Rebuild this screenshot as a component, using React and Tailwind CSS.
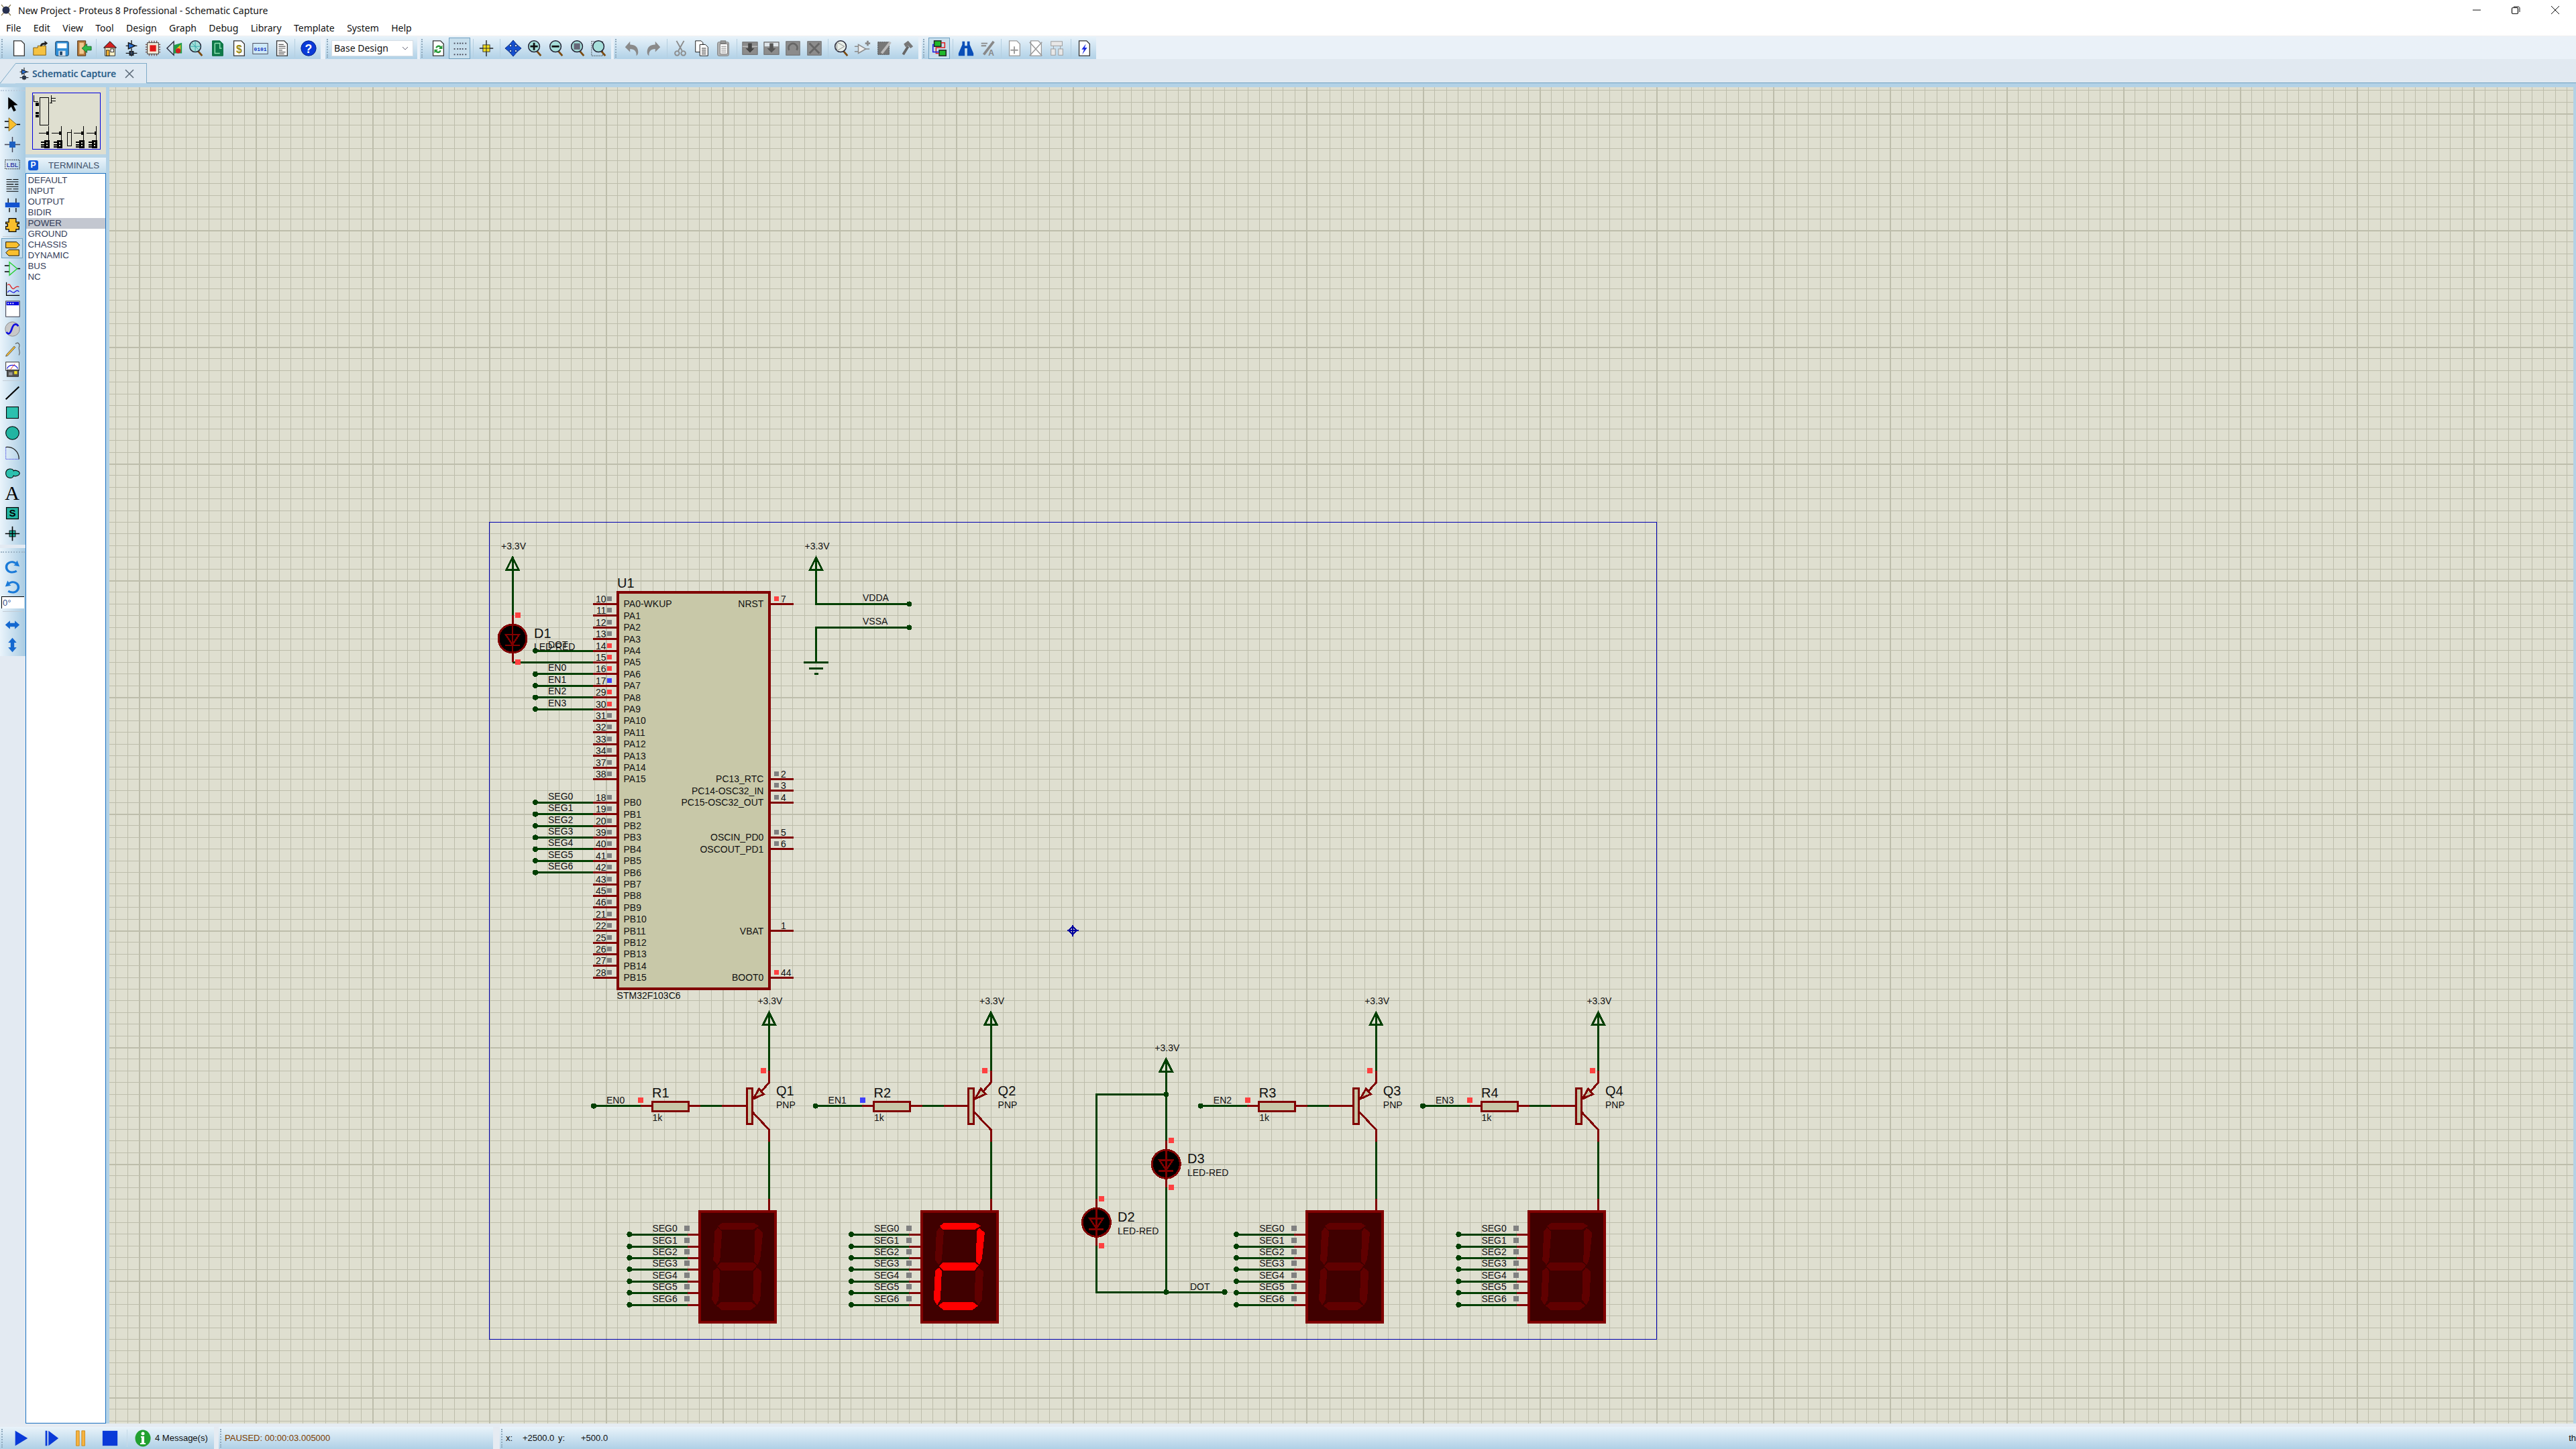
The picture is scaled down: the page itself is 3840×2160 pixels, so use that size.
import React from 'react';

const GREEN = '#003f00';
const RED = '#800000';
const BODY = '#c8c8a8';
const HOT = '#ff4040';
const COOL = '#4040ff';
const IDLE = '#808080';

const pinY = (i) => 900.4 + i * 17.4;
const gridStops = [0, 17, 35, 52, 70, 87, 104, 122, 139, 157];

const leftPins = [
    ['10', 'PA0-WKUP', 0, IDLE], ['11', 'PA1', 1, IDLE], ['12', 'PA2', 2, IDLE], ['13', 'PA3', 3, IDLE],
    ['14', 'PA4', 4, HOT], ['15', 'PA5', 5, HOT], ['16', 'PA6', 6, HOT], ['17', 'PA7', 7, COOL],
    ['29', 'PA8', 8, HOT], ['30', 'PA9', 9, HOT], ['31', 'PA10', 10, IDLE], ['32', 'PA11', 11, IDLE],
    ['33', 'PA12', 12, IDLE], ['34', 'PA13', 13, IDLE], ['37', 'PA14', 14, IDLE], ['38', 'PA15', 15, IDLE],
    ['18', 'PB0', 17, IDLE], ['19', 'PB1', 18, IDLE], ['20', 'PB2', 19, IDLE], ['39', 'PB3', 20, IDLE],
    ['40', 'PB4', 21, IDLE], ['41', 'PB5', 22, IDLE], ['42', 'PB6', 23, IDLE], ['43', 'PB7', 24, IDLE],
    ['45', 'PB8', 25, IDLE], ['46', 'PB9', 26, IDLE], ['21', 'PB10', 27, IDLE], ['22', 'PB11', 28, IDLE],
    ['25', 'PB12', 29, IDLE], ['26', 'PB13', 30, IDLE], ['27', 'PB14', 31, IDLE], ['28', 'PB15', 32, IDLE],
];

const rightPins = [
    ['7', 'NRST', 0, HOT], ['2', 'PC13_RTC', 15, IDLE], ['3', 'PC14-OSC32_IN', 16, IDLE],
    ['4', 'PC15-OSC32_OUT', 17, IDLE], ['5', 'OSCIN_PD0', 20, IDLE], ['6', 'OSCOUT_PD1', 21, IDLE],
    ['1', 'VBAT', 28, null], ['44', 'BOOT0', 32, HOT],
];

const nets = [
    ['DOT', 4], ['EN0', 6], ['EN1', 7], ['EN2', 8], ['EN3', 9],
    ['SEG0', 17], ['SEG1', 18], ['SEG2', 19], ['SEG3', 20], ['SEG4', 21], ['SEG5', 22], ['SEG6', 23],
];

const segments = {
    a: '36,18 82,18 90,23 82,28 33,28 29,23',
    b: '88,26 96,33 92,72 88,81 83,76 84,31',
    c: '87,85 94,91 92,133 87,141 81,133 82,91',
    d: '34,136 78,136 86,142 78,148 34,148 27,142',
    e: '28,85 32,90 30,133 25,141 20,133 22,90',
    f: '29,25 35,31 32,74 28,81 22,74 24,31',
    g: '34,77 81,77 87,82 81,89 34,89 28,83',
};

const segY = [1840, 1858, 1875, 1892, 1910, 1927, 1945];

const Wire = ({ d, color = GREEN }) => <path d={d} fill="none" stroke={color} strokeWidth="3" />;
const Dot = ({ x, y }) => <circle cx={x} cy={y} r="4" fill={GREEN} />;
const Sq = ({ x, y, color = HOT }) => <rect x={x} y={y} width="8" height="8" fill={color} />;
const Label = ({ x, y, size = 14, anchor, children }) => (
    <text x={x} y={y} fontSize={size} textAnchor={anchor} fill="#111" shapeRendering="auto">{children}</text>
);

const Power = ({ x, tip }) => (
    <g>
        <Label x={x - 17} y={tip - 11.5}>+3.3V</Label>
        <Wire d={`M${x} ${tip}V${tip + 19}`} />
        <polygon points={`${x},${tip + 1} ${x + 9},${tip + 19} ${x - 9},${tip + 19}`} fill="none" stroke={GREEN} strokeWidth="3" />
    </g>
);

const Led = ({ x, y }) => (
    <g>
        <Wire d={`M${x} ${y - 35}V${y + 35}`} color={RED} />
        <circle cx={x} cy={y} r="21" fill="#000" stroke={RED} strokeWidth="3" />
        <polygon points={`${x - 10},${y - 6} ${x + 10},${y - 6} ${x},${y + 9}`} fill="none" stroke={RED} strokeWidth="2.5" />
        <path d={`M${x - 11} ${y + 10}H${x + 11}M${x} ${y - 20}V${y + 20}`} stroke={RED} strokeWidth="2.5" />
        <Sq x={x + 4} y={y - 39} />
        <Sq x={x + 4} y={y + 31} />
    </g>
);

const Driver = ({ dx, q, r, en, blue }) => (
    <g transform={`translate(${dx} 0)`}>
        <Power x={1146.4} tip={1508.6} />
        <Wire d="M1146.4 1527V1596" />
        <Wire d="M1146.4 1596V1613.8L1134 1628" color={RED} />
        <polygon points="1131.5,1623 1138.5,1631 1123,1638" fill={BODY} stroke={RED} strokeWidth="3" />
        <Wire d="M1122 1658L1146.4 1684V1702" color={RED} />
        <Wire d="M1146.4 1702V1787" />
        <Wire d="M1146.4 1787V1805" color={RED} />
        <Sq x={1133.5} y={1591.5} />
        <Dot x={885} y={1648.6} />
        <Wire d="M885 1648.6H954.6" />
        <Wire d="M954.6 1648.6H972M1026 1648.6H1044" color={RED} />
        <Wire d="M1044 1648.6H1076" />
        <Wire d="M1076 1648.6H1112" color={RED} />
        <rect x="1113" y="1622.5" width="8" height="53" fill={BODY} stroke={RED} strokeWidth="3" />
        <rect x="972" y="1642" width="54" height="14" fill={BODY} stroke={RED} strokeWidth="3" />
        <Sq x={951} y={1635.5} color={blue ? COOL : HOT} />
        <Label x={904} y={1645}>{en}</Label>
        <Label x={972} y={1636} size={20}>{r}</Label>
        <Label x={972.4} y={1670.7}>1k</Label>
        <Label x={1157} y={1632.8} size={20}>{q}</Label>
        <Label x={1157} y={1652}>PNP</Label>
    </g>
);

const Display = ({ dx, lit = '' }) => (
    <g transform={`translate(${dx} 0)`}>
        <rect x="1043" y="1806" width="113" height="165" fill="#400000" stroke={RED} strokeWidth="4" />
        {Object.entries(segments).map(([key, pts]) => (
            <polygon
                key={key}
                points={pts}
                transform="translate(1041.3 1804.5)"
                fill={lit.includes(key) ? '#ff0000' : '#600000'}
            />
        ))}
        {segY.map((y, i) => (
            <g key={y}>
                <Dot x={938.3} y={y} />
                <Wire d={`M938.3 ${y}H1024.5`} />
                <Wire d={`M1024.5 ${y}H1042`} color={RED} />
                <rect x="1020" y={y - 13} width="8" height="8" fill={IDLE} />
                <Label x={972.4} y={y - 4}>{`SEG${i}`}</Label>
            </g>
        ))}
    </g>
);

const Chip = () => (
    <g>
        {leftPins.map(([num, name, i, color]) => (
            <g key={num}>
                <Wire d={`M884 ${pinY(i)}H920`} color={RED} />
                <rect x="905" y={pinY(i) - 11.5} width="7" height="7" fill={color} />
                <Label x={903.6} y={pinY(i) - 2.5} anchor="end">{num}</Label>
            </g>
        ))}
        {rightPins.map(([num, name, i, color]) => (
            <g key={num}>
                <Wire d={`M1147 ${pinY(i)}H1183`} color={RED} />
                {color && <rect x="1154" y={pinY(i) - 11.5} width="7" height="7" fill={color} />}
                <Label x={1164} y={pinY(i) - 2.5}>{num}</Label>
            </g>
        ))}
        <rect x="921" y="883" width="226" height="591" fill={BODY} stroke={RED} strokeWidth="3.5" />
        {leftPins.map(([num, name, i]) => (
            <Label key={name} x={929.5} y={pinY(i) + 5}>{name}</Label>
        ))}
        {rightPins.map(([num, name, i]) => (
            <Label key={name} x={1138.4} y={pinY(i) + 5} anchor="end">{name}</Label>
        ))}
        <Label x={920} y={876.4} size={20}>U1</Label>
        <Label x={919.6} y={1489}>STM32F103C6</Label>
        {nets.map(([name, i]) => (
            <g key={name}>
                <Dot x={798} y={pinY(i)} />
                <Wire d={`M798 ${pinY(i)}H884`} />
                <Label x={817} y={pinY(i) - 4.5}>{name}</Label>
            </g>
        ))}
    </g>
);

const Schematic = () => (
    <svg viewBox="163 130 3673 1992" className="block w-full h-full font-['Liberation_Sans',sans-serif]" shapeRendering="crispEdges">
        <defs>
            <pattern id="sheetGrid" patternUnits="userSpaceOnUse" x="33" y="169" width="174" height="174">
                <rect x="0" y="0" width="174" height="174" fill="#dfdfd0" />
                {gridStops.map((p) => (
                    <g key={p} fill="#bdbdab">
                        <rect x={p} y="0" width="1" height="174" />
                        <rect x="0" y={p} width="174" height="1" />
                    </g>
                ))}
                <rect x="0" y="0" width="2" height="174" fill="#bdbdab" />
                <rect x="0" y="0" width="174" height="2" fill="#bdbdab" />
            </pattern>
        </defs>
        <rect x="163" y="130" width="3673" height="1992" fill="url(#sheetGrid)" />
        <rect x="729.5" y="778.5" width="1740" height="1218" fill="none" stroke="#0000b0" strokeWidth="1" />

        <Chip />

        <Power x={764} tip={830} />
        <Wire d="M764 849V918" />
        <Wire d="M764 987H884" />
        <Led x={764} y={952} />
        <Label x={796} y={951.4} size={20}>D1</Label>
        <Label x={796} y={969}>LED-RED</Label>

        <Power x={1216.5} tip={830} />
        <Wire d="M1216.5 849V900.4H1355.4M1355.4 935.4H1216.5V987" />
        <Dot x={1355.4} y={900.4} />
        <Dot x={1355.4} y={935.4} />
        <Label x={1286} y={895.7}>VDDA</Label>
        <Label x={1286} y={930.5}>VSSA</Label>
        <Wire d="M1198 987H1235M1206 996.4H1227M1213.5 1004.5H1220" />

        <Driver dx={0} q="Q1" r="R1" en="EN0" />
        <Driver dx={330.6} q="Q2" r="R2" en="EN1" blue />
        <Driver dx={904.8} q="Q3" r="R3" en="EN2" />
        <Driver dx={1236} q="Q4" r="R4" en="EN3" />
        <Display dx={0} />
        <Display dx={330.6} lit="abged" />
        <Display dx={904.8} />
        <Display dx={1236} />

        <Power x={1738.3} tip={1578} />
        <Wire d="M1738.3 1597V1700M1738.3 1770V1926M1738.3 1631.3H1634.4V1787M1634.4 1857V1926H1825.6" />
        <Dot x={1738.3} y={1631.3} />
        <Dot x={1738.3} y={1926} />
        <Dot x={1825.6} y={1926} />
        <Led x={1738.3} y={1735.3} />
        <Led x={1634.4} y={1822.3} />
        <Label x={1770} y={1734} size={20}>D3</Label>
        <Label x={1770} y={1752.7}>LED-RED</Label>
        <Label x={1666} y={1821} size={20}>D2</Label>
        <Label x={1666} y={1839.7}>LED-RED</Label>
        <Label x={1774} y={1922.7}>DOT</Label>

        <g stroke="#0000a0" strokeWidth="1.5" fill="none">
            <path d="M1599 1378.5V1395.5M1590.5 1387H1607.5" />
            <path d="M1599 1381L1605 1387L1599 1393L1593 1387Z" />
        </g>
    </svg>
);

const Ico = ({ children, size = 28 }) => (
    <svg viewBox="0 0 28 28" width={size} height={size} className="shrink-0">{children}</svg>
);

const Page = ({ fill = '#fff', stroke = '#333' }) => (
    <path d="M6 2H18L23 7V26H6Z" fill={fill} stroke={stroke} strokeWidth="1.4" />
);

const Glass = ({ fill = '#a6dfda', children }) => (
    <g>
        <path d="M18 19L24 26" stroke="#7a4a10" strokeWidth="3" />
        <circle cx="13" cy="11" r="9" fill={fill} stroke="#223" strokeWidth="1.6" />
        {children}
    </g>
);

const toolbarIcons = {
    newDoc: <Page />,
    open: (<g><path d="M3 13H10V10H23V25H3Z" fill="#f5c242" stroke="#7a5a10" /><path d="M14 11C14 6 17 5 21 5V2L26 6L21 10V8C18 8 17 9 16 11Z" fill="#222" /></g>),
    save: (<g><rect x="4" y="3" width="21" height="23" rx="2" fill="#2f8fd8" stroke="#135" /><path d="M7 6H22V14H7Z" fill="#fff" /><path d="M9 18H20V26H9Z" fill="#dfe6ee" /><rect x="11" y="19" width="4" height="6" fill="#246" /></g>),
    exit: (<g><path d="M5 2H18V26H5Z" fill="#b57a3a" stroke="#4a2a10" /><path d="M8 5H15V23H8Z" fill="#f0c890" /><path d="M12 14L20 7V11H27V17H20V21Z" fill="#2eb84a" stroke="#186a28" /></g>),
    home: (<g><path d="M14 3L4 13H6V26H22V13H24Z" fill="#fff3c8" stroke="#222" /><path d="M14 3L4 13H24Z" fill="#d32020" stroke="#222" /><rect x="15" y="15" width="5" height="5" fill="#fff" stroke="#222" /><rect x="8" y="17" width="5" height="9" fill="#f0b030" stroke="#222" /></g>),
    sch: (<g stroke="#111" strokeWidth="1.4"><path d="M14 1V7M14 14V19M14 24V27M5 10H23M5 22H12M16 22H23" fill="none" /><path d="M9 5L20 10L9 15Z" fill="#2a6fd0" /><rect x="11" y="19" width="2" height="6" fill="#2a6fd0" /><rect x="15" y="19" width="2" height="6" fill="#2a6fd0" /></g>),
    chip: (<g><path d="M8 2V26M12 2V26M16 2V26M20 2V26M2 8H26M2 12H26M2 16H26M2 20H26" stroke="#7a4a40" strokeWidth="1.4" /><rect x="5" y="5" width="18" height="18" fill="#f0ead8" stroke="#333" /><rect x="9" y="9" width="10" height="10" fill="#e01818" /></g>),
    threeD: (<g><path d="M2 14L13 3V25Z" fill="none" stroke="#223" strokeWidth="1.4" /><path d="M13 9L26 5V22L13 22Z" fill="#1f9a48" /><path d="M16 16L24 8V20Z" fill="#e0c020" /><circle cx="20" cy="18" r="4" fill="#d02020" /></g>),
    glass: <Glass><path d="M13 2V20M4 11H22M7 5L19 17" stroke="#3aa" strokeWidth="1" /></Glass>,
    pcb: (<g><path d="M6 2H18L23 7V26H6Z" fill="#0e7a4a" stroke="#063" /><path d="M10 6H18V14H21M10 6V22H18" fill="none" stroke="#8fe0b0" strokeWidth="1.6" /></g>),
    dollar: (<g><Page /><text x="14.5" y="21" fontSize="17" fontWeight="700" textAnchor="middle" fill="#9a8a10" fontFamily="Liberation Sans">$</text></g>),
    binary: (<g><rect x="2" y="6" width="24" height="17" fill="#cfeaf8" stroke="#445" /><text x="14" y="18" fontSize="8.5" fontWeight="700" textAnchor="middle" fill="#1030c0" fontFamily="Liberation Mono">0101</text></g>),
    report: (<g><Page /><path d="M9 8H17M9 11H20M9 14H20M9 17H15M9 20H20M9 23H18" stroke="#555" strokeWidth="1.3" /></g>),
    help: (<g><circle cx="14" cy="14" r="12" fill="#0a3ad8" stroke="#062080" /><text x="14" y="21" fontSize="19" fontWeight="700" textAnchor="middle" fill="#fff" fontFamily="Liberation Sans">?</text></g>),
    refresh: (<g><Page /><path d="M10 13C11 9 16 8 19 11L21 9V15H15L17 13C15 11 13 12 12 14Z" fill="#2a9a3a" /><path d="M19 18C18 22 13 23 10 20L8 22V16H14L12 18C14 20 16 19 17 17Z" fill="#2a9a3a" /></g>),
    grid: (<g fill="#445">{[5, 14, 23].map((y) => [5, 10, 14, 18, 23].map((x) => <rect key={`${x}-${y}`} x={x} y={y} width="2" height="2" />))}</g>),
    origin: (<g><path d="M14 1V27M3 14H25" stroke="#222" strokeWidth="1.5" /><rect x="8.5" y="8.5" width="11" height="11" fill="#f4e020" stroke="#333" /><path d="M14 8V20M8 14H20" stroke="#222" /></g>),
    pan: <path d="M14 1L20 8H16.5V11.5H20V8L27 14L20 20V16.5H16.5V20H20L14 27L8 20H11.5V16.5H8V20L1 14L8 8V11.5H11.5V8H8Z" fill="#1550d0" stroke="#0a2a80" />,
    zoomIn: <Glass><path d="M7 11H19M13 5V17" stroke="#111" strokeWidth="3" /></Glass>,
    zoomOut: <Glass><path d="M7 11H19" stroke="#111" strokeWidth="3" /></Glass>,
    zoomAll: <Glass><rect x="8" y="6" width="10" height="10" fill="#667" /></Glass>,
    zoomArea: (<g><rect x="2" y="3" width="18" height="23" fill="none" stroke="#222" strokeDasharray="1.5 1.5" /><Glass /></g>),
    undo: <path d="M3 12L11 3V8C19 8 24 12 24 20C24 23 23 25 21 26C22 19 18 15 11 15V20Z" fill="#8a8a8a" />,
    redo: <path d="M25 12L17 3V8C9 8 4 12 4 20C4 23 5 25 7 26C6 19 10 15 17 15V20Z" fill="#8a8a8a" />,
    cut: (<g fill="none" stroke="#8a8a8a" strokeWidth="2"><path d="M8 2L17 18M20 2L11 18" /><circle cx="9" cy="22" r="3.5" /><circle cx="19" cy="22" r="3.5" /></g>),
    copy: (<g stroke="#111"><path d="M4 2H13L16 5V20H4Z" fill="#fff" /><path d="M11 8H20L24 12V26H11Z" fill="#fff" /><path d="M14 14H21M14 17H21M14 20H21M14 23H21" /></g>),
    paste: (<g stroke="#777"><rect x="5" y="4" width="18" height="22" rx="2" fill="#b5b5b5" /><rect x="9" y="7" width="12" height="16" fill="#fff" /><rect x="10" y="2" width="8" height="4" fill="#999" /><path d="M11 11H19M11 14H19M11 17H19M11 20H19" /></g>),
    blockCopy: (<g><rect x="2" y="4" width="24" height="20" fill="#8c8c8c" stroke="#666" /><path d="M2 11H26" stroke="#ddd" /><path d="M11 6H17V14H21L14 21L7 14H11Z" fill="#444" /></g>),
    blockMove: (<g><rect x="2" y="4" width="24" height="20" fill="#8c8c8c" stroke="#666" /><rect x="3" y="5" width="22" height="6" fill="#dfe5ea" /><path d="M11 6H17V14H21L14 21L7 14H11Z" fill="#555" /></g>),
    blockRotate: (<g><rect x="3" y="3" width="22" height="22" fill="#8c8c8c" stroke="#666" /><path d="M8 17A7 7 0 1 1 20 17" fill="none" stroke="#666" strokeWidth="3" /></g>),
    blockDelete: (<g><rect x="3" y="3" width="22" height="22" fill="#8c8c8c" stroke="#666" /><path d="M6 6L22 22M22 6L6 22" stroke="#666" strokeWidth="3" /></g>),
    pick: <Glass fill="#e8eee8"><path d="M7 4L19 11L7 18Z" fill="none" stroke="#888" /></Glass>,
    device: (<g fill="none" stroke="#8a8a8a" strokeWidth="1.6"><path d="M7 8L19 15L7 22Z" fill="#eee" /><path d="M1 11H7M1 19H7M19 15H25" /><path d="M22 2V10M18 6H26" strokeWidth="3" /></g>),
    pack: (<g><rect x="4" y="4" width="18" height="20" fill="#777" stroke="#444" strokeDasharray="2 1" /><path d="M24 4L10 22" stroke="#bbb" strokeWidth="4" /></g>),
    hammer: (<g><path d="M10 24L18 11" stroke="#666" strokeWidth="4" /><path d="M11 7L18 2L26 11L22 14L18 10L14 12Z" fill="#777" /></g>),
    net: (<g fill="none" strokeWidth="1.6"><rect x="6" y="2" width="11" height="9" fill="#1fb82a" stroke="#222" /><rect x="14" y="17" width="11" height="9" fill="#1fb82a" stroke="#222" /><path d="M17 5H23V13H9V22H14" stroke="#e02020" /><path d="M6 8H4V20H14" stroke="#1a1ae0" /></g>),
    binoculars: (<g fill="#0a4fb8"><path d="M8 3H12V10H16V3H20V8L26 22V26H16V14H12V26H2V22L8 8Z" /></g>),
    property: (<g><path d="M4 6H14M4 10H12" stroke="#888" strokeWidth="2" /><path d="M24 3L8 24" stroke="#888" strokeWidth="4" /><text x="20" y="26" fontSize="13" fontWeight="700" textAnchor="middle" fill="#888" fontFamily="Liberation Sans">A</text></g>),
    newSheet: (<g><Page stroke="#999" /><path d="M14 11V23M8 17H20" stroke="#999" strokeWidth="2" /></g>),
    delSheet: (<g><Page stroke="#999" /><path d="M4 4L24 26M24 4L4 26" stroke="#999" strokeWidth="1.6" /></g>),
    child: (<g fill="#e8e8e8" stroke="#999"><rect x="4" y="3" width="18" height="7" /><rect x="4" y="15" width="7" height="10" /><rect x="16" y="15" width="7" height="10" /><path d="M8 10V15M19 10V15" /></g>),
    bolt: (<g><Page /><path d="M17 7L10 16H14L11 24L19 13H15Z" fill="#1a2ae0" /></g>),
};

const sideIcons = {
    select: <path d="M7 2V23L12 18L16 26L20 24L16 16L23 15Z" fill="#000" />,
    comp: (<g><path d="M1 9H8M1 19H8M21 14H27" stroke="#000" strokeWidth="1.5" /><path d="M8 3L21 14L8 25Z" fill="#f9bf2d" stroke="#7a5a10" /></g>),
    junction: (<g><path d="M14 1V27M1 14H27" stroke="#445" strokeWidth="1.6" /><rect x="9" y="9" width="10" height="10" fill="#1d5fc0" /></g>),
    lbl: (<g><rect x="2" y="6" width="24" height="15" fill="none" stroke="#000" strokeDasharray="2 1.5" /><text x="14" y="18" fontSize="11" textAnchor="middle" fill="#0a0a90" fontFamily="Liberation Sans">LBL</text></g>),
    script: <path d="M4 5H13M15 5H24M4 9H24M4 13H16M18 13H24M4 17H24M4 21H13M15 21H24M4 25H24" stroke="#000" strokeWidth="1.2" />,
    bus: (<g><path d="M7 3V10M20 3V10M9 19V26M20 19V26" stroke="#111" strokeWidth="1.6" /><rect x="2" y="10" width="24" height="8" fill="#1253d0" /></g>),
    sub: <path d="M8 3H20V9H25V12H22V16H25V21H20V25H8V21H3V16H6V12H3V9H8Z" fill="#f9bf2d" stroke="#000" strokeWidth="1.4" />,
    terminal: (<g stroke="#000"><path d="M3 3H21L26 8L21 13H3Z" fill="#f9bf2d" /><path d="M25 16H8L3 21L8 26H25Z" fill="#f9bf2d" /></g>),
    pin: (<g><path d="M1 9H9M1 19H9M22 14H27" stroke="#000" strokeWidth="1.5" /><path d="M9 3L22 14L9 25Z" fill="none" stroke="#1fd02a" strokeWidth="1.4" /></g>),
    graph: (<g fill="none" strokeWidth="1.4"><path d="M4 3V25H26" stroke="#000" /><path d="M6 8C10 2 12 16 16 14C19 12 21 8 25 11" stroke="#e02020" /><path d="M6 20C10 13 13 22 17 20C20 18 22 15 25 19" stroke="#1a1ae0" /></g>),
    tape: (<g><rect x="3" y="1" width="23" height="26" fill="#fff" stroke="#223" /><rect x="4" y="2" width="21" height="6" fill="#0a0ae0" /><path d="M6 5H8M10 5H12M14 5H16" stroke="#fff" strokeWidth="2" /></g>),
    gen: (<g><circle cx="14" cy="14" r="12" fill="#c8c8c8" stroke="#888" /><path d="M4 19C8 25 11 20 13 14C15 7 19 3 24 9" fill="none" stroke="#1010e0" strokeWidth="3" /></g>),
    probe: (<g><path d="M4 23L3 26L6 25L19 11L17 9Z" fill="#f4bb30" stroke="#555" /><path d="M19 5C24 1 27 6 25 11C24 15 28 18 25 24" fill="none" stroke="#555" strokeWidth="1.2" /></g>),
    meter: (<g><rect x="3" y="2" width="22" height="14" fill="#fff" stroke="#222" /><path d="M5 13C8 5 20 5 23 13" fill="none" stroke="#1a1ae0" strokeWidth="1.4" /><path d="M11 14L18 5" stroke="#e02020" /><rect x="5" y="15" width="19" height="11" fill="#555" stroke="#222" /><rect x="17" y="17" width="5" height="5" fill="#f0e020" /><rect x="8" y="19" width="6" height="5" fill="#999" /></g>),
    line: <path d="M3 25L25 4" stroke="#000" strokeWidth="2.4" />,
    box: <rect x="4" y="4" width="20" height="19" fill="#2cc0ae" stroke="#000" strokeWidth="1.2" />,
    circle: <circle cx="14" cy="14" r="11" fill="#22b5a2" stroke="#000" strokeWidth="1.2" />,
    arc: (<g fill="none"><path d="M3 4V24H25" stroke="#3030e0" strokeDasharray="1.5 1" /><path d="M3 4C15 3 25 11 25 24" stroke="#222" strokeWidth="1.4" /></g>),
    poly: <path d="M3 14C3 5 15 5 16 10C18 8 26 10 26 14C26 18 18 20 16 18C14 24 3 23 3 14Z" fill="#2cc0ae" stroke="#000" strokeWidth="1.2" />,
    symbol: (<g><rect x="4" y="4" width="20" height="19" fill="#22b5a2" stroke="#000" strokeWidth="1.4" /><text x="14" y="19" fontSize="17" fontWeight="700" textAnchor="middle" fill="#000" fontFamily="Liberation Sans">S</text></g>),
    marker: (<g><rect x="9" y="9" width="10" height="10" fill="#22b5a2" stroke="#000" /><path d="M14 2V26M2 14H26" stroke="#000" strokeWidth="1.8" /></g>),
    cw: <path d="M22 4L26 14L16 12L19 10C13 6 6 9 6 15C6 21 14 24 20 20L22 23C13 28 2 24 2 15C2 6 13 2 20 7Z" fill="#1a7ad8" />,
    ccw: <path d="M6 4L2 14L12 12L9 10C15 6 22 9 22 15C22 21 14 24 8 20L6 23C15 28 26 24 26 15C26 6 15 2 8 7Z" fill="#1a7ad8" />,
    flipH: <path d="M2 14L10 7V11H18V7L26 14L18 21V17H10V21Z" fill="#1468d0" />,
    flipV: <path d="M14 2L21 10H17V18H21L14 26L7 18H11V10H7Z" fill="#1468d0" />,
};

const terminalNames = ['DEFAULT', 'INPUT', 'OUTPUT', 'BIDIR', 'POWER', 'GROUND', 'CHASSIS', 'DYNAMIC', 'BUS', 'NC'];
const menus = ['File', 'Edit', 'View', 'Tool', 'Design', 'Graph', 'Debug', 'Library', 'Template', 'System', 'Help'];

const Grip = ({ gap = 'mr-[7px]' }) => (
    <div className={`ml-[2px] w-[2px] h-[28px] border-l-2 border-dotted border-[#8fa9bd] ${gap}`} />
);

const Sep = () => (
    <div className="w-[8px] h-[28px] flex justify-center"><div className="w-px h-full bg-[#b5cfe0]" /></div>
);

const Btn = ({ icon, active }) => (
    <div className={`w-[32px] h-[32px] flex items-center justify-center ${active ? 'bg-[#c7deec] border border-[#6e9fbf]' : ''}`}>
        <Ico size={26}>{toolbarIcons[icon]}</Ico>
    </div>
);

const Segment = ({ className = '', children }) => (
    <div className={`h-[35px] flex items-center bg-linear-to-b from-[#e9f3fa] to-[#afd0e6] ${className}`}>{children}</div>
);

const Tool = ({ icon, active }) => (
    <div className={`h-[30px] ml-[2px] mr-[4px] flex items-center justify-center ${active ? 'bg-[#c2dbeb] border border-[#6e9fbf]' : ''}`}>
        {icon === 'text'
            ? <span className="font-['Liberation_Serif',serif] text-[30px] leading-[30px] text-black">A</span>
            : <Ico size={25}>{sideIcons[icon]}</Ico>}
    </div>
);

const Rule = ({ className = '' }) => <div className={`mx-[4px] h-px bg-[#c3ccd5] ${className}`} />;

const Overview = () => (
    <svg viewBox="114 0 360 300" className="block w-[120px] h-[100px]" shapeRendering="crispEdges">
        <rect x="114" y="0" width="360" height="300" fill="#dfdfd0" />
        <rect x="145" y="25" width="302" height="253" fill="none" stroke="#0000e0" strokeWidth="3" />
        <g fill="none" stroke="#000" strokeWidth="3">
            <rect x="178" y="46" width="40" height="124" />
            <path d="M150 36V65H172M228 36V70M228 48H250M228 60H250M222 70H234" />
            <path d="M218 175V238M174 205H212M274 175V238M232 205H268M372 175V238M330 205H366M430 175V238M388 205H424" />
            <path d="M301 202H319V262H301ZM319 190V262" />
        </g>
        <g fill="#000">
            <rect x="160" y="70" width="15" height="14" />
            <rect x="160" y="110" width="15" height="10" />
            <rect x="160" y="124" width="15" height="10" />
            {[183, 240, 339, 396].map((x) => (
                <g key={x}>
                    <rect x={x + 15} y="238" width="23" height="34" />
                    <rect x={x} y="244" width="15" height="6" />
                    <rect x={x} y="254" width="15" height="6" />
                    <rect x={x} y="264" width="15" height="6" />
                    <rect x={x + 24} y="246" width="6" height="6" fill="#dfdfd0" />
                    <rect x={x + 24} y="258" width="6" height="6" fill="#dfdfd0" />
                </g>
            ))}
            <rect x="208" y="198" width="10" height="14" />
            <rect x="265" y="198" width="10" height="14" />
            <rect x="364" y="198" width="10" height="14" />
            <rect x="422" y="198" width="10" height="14" />
        </g>
    </svg>
);

const SidePanel = () => (
    <div className="w-[163px] flex shrink-0 bg-[#e3eaf2]">
        <div className="w-[38px] shrink-0 flex flex-col">
            <div className="bg-linear-to-r from-[#eaf4fb] to-[#a8cbe2] flex flex-col h-[682px]">
                <div className="h-[10px] shrink-0 flex items-center pl-[1px]"><div className="w-[36px] border-t-2 border-dotted border-[#bcd]" /></div>
                {['select', 'comp', 'junction', 'lbl', 'script', 'bus', 'sub'].map((k) => <Tool key={k} icon={k} />)}
                <Rule className="my-[2px]" />
                <Tool icon="terminal" active />
                {['pin', 'graph', 'tape', 'gen', 'probe', 'meter'].map((k) => <Tool key={k} icon={k} />)}
                <Rule className="my-[2px]" />
                {['line', 'box', 'circle', 'arc', 'poly', 'text', 'symbol', 'marker'].map((k) => <Tool key={k} icon={k} />)}
            </div>
            <div className="h-[5px]" />
            <div className="bg-linear-to-r from-[#eaf4fb] to-[#a8cbe2] flex flex-col h-[161px]">
                <div className="h-[12px] shrink-0 flex items-center pl-[1px]"><div className="w-[36px] border-t-2 border-dotted border-[#9db4c6]" /></div>
                <Tool icon="cw" />
                <Tool icon="ccw" />
                <div className="ml-[2px] mr-[2px] h-[18px] bg-white border-l border-t border-black text-[#33508a] text-[13px] leading-[17px] pl-[1px]">0°</div>
                <Rule className="my-[4px]" />
                <Tool icon="flipH" />
                <Tool icon="flipV" />
            </div>
        </div>
        <div className="w-[120px] shrink-0 flex flex-col">
            <Overview />
            <div className="h-[5px] bg-[#b8d4e6]" />
            <div className="h-[23px] flex items-center bg-linear-to-b from-[#eaf4fb] to-[#c2dcec]">
                <div className="ml-[4px] w-[15px] h-[15px] rounded-[3px] bg-[#1258d8] text-white text-[12px] font-bold leading-[15px] text-center">P</div>
                <div className="ml-[15px] text-[13.3px] text-[#3d4d66]">TERMINALS</div>
            </div>
            <div className="flex-1 bg-white border border-[#1a70c0] pt-[2px]">
                {terminalNames.map((t) => (
                    <div key={t} className={`h-[16px] leading-[16px] text-[13.3px] pl-[2.5px] text-[#333c58] ${t === 'POWER' ? 'bg-[#c3c7d0]' : ''}`}>{t}</div>
                ))}
            </div>
        </div>
        <div className="w-[5px] shrink-0 bg-[#b3d2e6]" />
    </div>
);

const StatusIcon = ({ children }) => <Ico size={26}>{children}</Ico>;

export default function App() {
    return (
        <div className="w-screen h-screen overflow-hidden flex flex-col bg-[#eaf1f8] font-['Liberation_Sans',sans-serif]">
            {/* title and menu */}
            <div className="h-[30px] shrink-0 bg-white flex items-center font-['Noto_Sans',sans-serif] text-[14px] text-[#111]">
                <svg viewBox="0 0 16 18" className="ml-[1px] w-[16px] h-[18px]">
                    <path d="M1 1L15 17M15 1L1 17" stroke="#8a7a50" strokeWidth="1.2" />
                    <circle cx="8" cy="9" r="5.5" fill="#27304f" />
                </svg>
                <span className="ml-[10px]">New Project - Proteus 8 Professional - Schematic Capture</span>
                <div className="ml-auto flex pr-[2px]">
                    <div className="w-[58.5px] flex justify-center"><svg width="14" height="14" viewBox="0 0 14 14"><path d="M1 7H13" stroke="#111" /></svg></div>
                    <div className="w-[58.5px] flex justify-center"><svg width="14" height="14" viewBox="0 0 14 14" fill="none" stroke="#111"><rect x="1.5" y="3.5" width="9" height="9" rx="1.5" strokeWidth="1.2" /><path d="M4 2H11C12 2 13 3 13 4V10" /></svg></div>
                    <div className="w-[58.5px] flex justify-center"><svg width="14" height="14" viewBox="0 0 14 14"><path d="M1 1L13 13M13 1L1 13" stroke="#111" /></svg></div>
                </div>
            </div>
            <div className="h-[23px] shrink-0 bg-white flex items-center gap-[18.4px] pl-[9px] font-['Noto_Sans',sans-serif] text-[14px] text-[#111]">
                {menus.map((m) => <span key={m}>{m}</span>)}
            </div>

            {/* toolbars */}
            <div className="h-[35px] shrink-0 flex border-t border-[#f0f0f0]">
                <Segment className="w-[478px]">
                    <Grip gap="mr-[7.5px]" />
                    {['newDoc', 'open', 'save', 'exit'].map((k) => <Btn key={k} icon={k} />)}
                    <Sep />
                    {['home', 'sch', 'chip', 'threeD', 'glass', 'pcb', 'dollar', 'binary', 'report'].map((k) => <Btn key={k} icon={k} />)}
                    <Sep />
                    <Btn icon="help" />
                </Segment>
                <Segment className="ml-[7px] w-[136.5px]">
                    <Grip gap="mr-[5px]" />
                    <div className="w-[122px] h-[24px] bg-white border border-[#d5dde5] flex items-center justify-between pl-[3px] pr-[6px] font-['Noto_Sans',sans-serif] text-[14px] text-[#111]">
                        <span>Base Design</span>
                        <svg width="10" height="6" viewBox="0 0 10 6"><path d="M1 1L5 5L9 1" fill="none" stroke="#667" /></svg>
                    </div>
                </Segment>
                <Segment className="ml-[4.5px] w-[285px]">
                    <Grip />
                    <Btn icon="refresh" />
                    <Btn icon="grid" active />
                    <Sep />
                    <Btn icon="origin" />
                    <Sep />
                    {['pan', 'zoomIn', 'zoomOut', 'zoomAll', 'zoomArea'].map((k) => <Btn key={k} icon={k} />)}
                </Segment>
                <Segment className="ml-[4px] w-[454px]">
                    <Grip />
                    {['undo', 'redo'].map((k) => <Btn key={k} icon={k} />)}
                    <Sep />
                    {['cut', 'copy', 'paste'].map((k) => <Btn key={k} icon={k} />)}
                    <Sep />
                    {['blockCopy', 'blockMove', 'blockRotate', 'blockDelete'].map((k) => <Btn key={k} icon={k} />)}
                    <Sep />
                    {['pick', 'device', 'pack', 'hammer'].map((k) => <Btn key={k} icon={k} />)}
                </Segment>
                <Segment className="ml-[5px] w-[260px]">
                    <Grip gap="mr-[6px]" />
                    <Btn icon="net" active />
                    <Sep />
                    {['binoculars', 'property'].map((k) => <Btn key={k} icon={k} />)}
                    <Sep />
                    {['newSheet', 'delSheet', 'child'].map((k) => <Btn key={k} icon={k} />)}
                    <Sep />
                    <Btn icon="bolt" />
                </Segment>
            </div>

            {/* tab strip */}
            <div className="h-[36px] shrink-0 flex items-end bg-[#e1e9f1] border-b border-[#6fa0c0]">
                <div className="relative ml-[23px] w-[196px] h-[30px] -mb-px bg-[#dfe9f2] border-t border-r border-[#7fabc8] flex items-center pl-[3px]">
                    <svg viewBox="0 0 23 30" className="absolute right-full -top-px w-[23px] h-[31px]">
                        <path d="M23 0L0 30H23Z" fill="#dfe9f2" />
                        <path d="M23 0.5L0 30" fill="none" stroke="#7fabc8" />
                    </svg>
                    <Ico size={20}>{toolbarIcons.sch}</Ico>
                    <span className="ml-[2px] font-['Noto_Sans',sans-serif] font-semibold text-[14px] tracking-[-0.2px] text-[#2c5f8a]">Schematic Capture</span>
                    <svg width="16" height="16" viewBox="0 0 16 16" className="ml-[12px]"><path d="M2 2L14 14M14 2L2 14" stroke="#5c6a78" strokeWidth="1.6" /></svg>
                </div>
            </div>

            {/* work area */}
            <div className="flex-1 min-h-0 flex flex-col bg-[#b3d2e6] pt-[6px]">
                <div className="flex-1 min-h-0 flex pr-[4px]">
                    <SidePanel />
                    <div className="flex-1 min-w-0"><Schematic /></div>
                </div>
                <div className="h-[5px] shrink-0 bg-[#e5ebf2]" />
            </div>

            {/* status bar */}
            <div className="h-[33px] shrink-0 flex text-[13px] text-[#111] bg-[#e5ebf2]">
                <div className="w-[319px] flex items-center bg-linear-to-b from-[#e9f3fa] to-[#afd0e6]">
                    <Grip gap="mr-[15px]" />
                    <div className="flex items-center gap-[18px]">
                        <StatusIcon><path d="M4 2L24 14L4 26Z" fill="#0a3ad8" /></StatusIcon>
                        <StatusIcon><path d="M5 2H8V26H5ZM10 2L26 14L10 26Z" fill="#0a3ad8" /></StatusIcon>
                        <StatusIcon><path d="M7 2H12V26H7ZM16 2H21V26H16Z" fill="#f6b340" stroke="#c98a20" /></StatusIcon>
                        <StatusIcon><rect x="2" y="2" width="24" height="24" fill="#0a3ad8" /></StatusIcon>
                    </div>
                    <div className="ml-[12px] w-px h-[26px] bg-[#c5dae8]" />
                    <svg viewBox="0 0 24 26" className="ml-[11px] w-[24px] h-[26px]">
                        <ellipse cx="12" cy="13" rx="11.5" ry="12.5" fill="#22a030" />
                        <circle cx="12" cy="6" r="2.5" fill="#fff" />
                        <path d="M9 10H14V20H16V22H8V20H10V12H9Z" fill="#fff" />
                    </svg>
                    <span className="ml-[6px] whitespace-nowrap">4 Message(s)</span>
                </div>
                <div className="ml-[7px] w-[409px] flex items-center bg-linear-to-b from-[#e9f3fa] to-[#afd0e6]">
                    <Grip gap="mr-[5px]" />
                    <span className="text-[13px] text-[#804000]">PAUSED: 00:00:03.005000</span>
                </div>
                <div className="ml-[10px] flex-1 flex items-center bg-linear-to-b from-[#e9f3fa] to-[#afd0e6]">
                    <Grip gap="mr-[5px]" />
                    <span className="w-[25px]">x:</span>
                    <span className="w-[53px]">+2500.0</span>
                    <span className="w-[34px]">y:</span>
                    <span>+500.0</span>
                    <span className="ml-auto">th</span>
                </div>
            </div>
        </div>
    );
}
